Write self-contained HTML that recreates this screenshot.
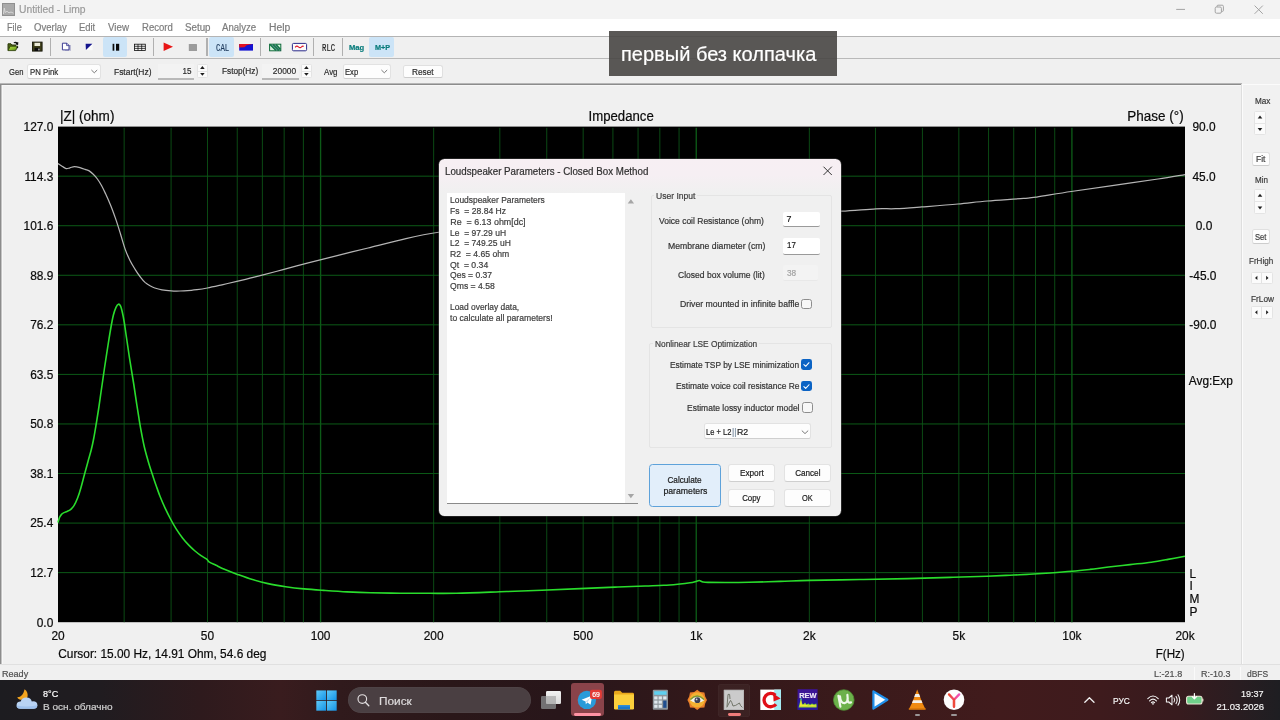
<!DOCTYPE html>
<html><head><meta charset="utf-8"><title>Limp</title>
<style>
html,body{margin:0;padding:0;width:1280px;height:720px;overflow:hidden;background:#f0f0f0;}
body{position:relative;font-family:"Liberation Sans",sans-serif;}
.t{position:absolute;white-space:nowrap;line-height:1;display:block;-webkit-text-stroke:0.2px;}
.b{position:absolute;display:block;}
#root{position:absolute;left:0;top:0;width:1280px;height:720px;overflow:hidden;will-change:transform;}
</style></head><body><div id="root">
<div class="b" style="left:0.00px;top:0.00px;width:1280.00px;height:19.00px;background:#f3f3f3;"></div>
<svg class="b" style="left:2px;top:3.4px" width="13" height="13" viewBox="0 0 13 13"><rect width="13" height="13" fill="#a9a9a9"/><rect x="0.5" y="0.5" width="12" height="12" fill="none" stroke="#8f8f8f"/><path d="M1.5 11 L2.3 5 L3.2 9.5 L5 8.3 L7 9.8 L9 9 L11.5 10.2" fill="none" stroke="#d6d6d6" stroke-width="1"/></svg>
<span class="t" style="left:18.80px;top:5.00px;font-size:10.0px;color:#9b9b9b;transform:scaleX(1.0315);transform-origin:0 0;">Untitled - Limp</span>
<svg class="b" style="left:1170px;top:0" width="100" height="19" viewBox="0 0 100 19"><g fill="none" stroke="#a3a3a3" stroke-width="1"><path d="M6.2 9.4 H15"/><rect x="45.2" y="7" width="6.2" height="6.2" rx="1.3"/><path d="M47 7 V6.2 Q47 5.2 48 5.2 H52.2 Q53.4 5.2 53.4 6.4 V10.4 Q53.4 11.4 52.4 11.4 H51.4"/><path d="M84.6 5.6 L92.8 13.8 M92.8 5.6 L84.6 13.8"/></g></svg>
<div class="b" style="left:0.00px;top:19.00px;width:1280.00px;height:17.20px;background:#ffffff;"></div>
<span class="t" style="left:6.50px;top:23.00px;font-size:10.0px;color:#7d7d7d;transform:scaleX(0.9122);transform-origin:0 0;">File</span>
<span class="t" style="left:33.80px;top:23.00px;font-size:10.0px;color:#7d7d7d;transform:scaleX(0.9520);transform-origin:0 0;">Overlay</span>
<span class="t" style="left:79.40px;top:23.00px;font-size:10.0px;color:#7d7d7d;transform:scaleX(0.9401);transform-origin:0 0;">Edit</span>
<span class="t" style="left:108.00px;top:23.00px;font-size:10.0px;color:#7d7d7d;transform:scaleX(0.9770);transform-origin:0 0;">View</span>
<span class="t" style="left:141.80px;top:23.00px;font-size:10.0px;color:#7d7d7d;transform:scaleX(0.9523);transform-origin:0 0;">Record</span>
<span class="t" style="left:184.50px;top:23.00px;font-size:10.0px;color:#7d7d7d;transform:scaleX(0.9758);transform-origin:0 0;">Setup</span>
<span class="t" style="left:222.00px;top:23.00px;font-size:10.0px;color:#7d7d7d;transform:scaleX(0.9613);transform-origin:0 0;">Analyze</span>
<span class="t" style="left:268.80px;top:23.00px;font-size:10.0px;color:#7d7d7d;transform:scaleX(1.0308);transform-origin:0 0;">Help</span>
<div class="b" style="left:0.00px;top:36.20px;width:1280.00px;height:22.00px;background:#f0f0f0;"></div>
<div class="b" style="left:0.00px;top:36.00px;width:1280.00px;height:1.00px;background:#b4b4b4;"></div>
<div class="b" style="left:0.00px;top:58.00px;width:1280.00px;height:1.00px;background:#b9b9b9;"></div>
<div class="b" style="left:102.80px;top:37.40px;width:24.70px;height:19.60px;background:#cce4f7;border-radius:2px;"></div>
<div class="b" style="left:209.40px;top:37.40px;width:24.40px;height:19.60px;background:#cce4f7;border-radius:2px;"></div>
<div class="b" style="left:369.40px;top:37.40px;width:24.40px;height:19.60px;background:#cce4f7;border-radius:2px;"></div>
<div class="b" style="left:50.05px;top:38.20px;width:1.10px;height:17.80px;background:#b0b0b0;"></div>
<div class="b" style="left:152.95px;top:38.20px;width:1.10px;height:17.80px;background:#b0b0b0;"></div>
<div class="b" style="left:206.45px;top:38.20px;width:1.10px;height:17.80px;background:#b0b0b0;"></div>
<div class="b" style="left:259.85px;top:38.20px;width:1.10px;height:17.80px;background:#b0b0b0;"></div>
<div class="b" style="left:312.85px;top:38.20px;width:1.10px;height:17.80px;background:#b0b0b0;"></div>
<div class="b" style="left:341.95px;top:38.20px;width:1.10px;height:17.80px;background:#b0b0b0;"></div>
<svg class="b" style="left:0;top:36px" width="400" height="23" viewBox="0 36 400 23">
<defs><linearGradient id="fg" x1="0" y1="0" x2="1" y2="1"><stop offset="0" stop-color="#b4dc48"/><stop offset="0.55" stop-color="#86b82a"/><stop offset="1" stop-color="#3f6212"/></linearGradient></defs><path d="M8 50.4 V43.8 H11 L12 45 H15.6 V46.4" fill="#4d6414" stroke="#2c3a0c" stroke-width="1"/><path d="M8 50.6 L10.2 46.2 H17.8 L15.6 50.6 Z" fill="url(#fg)" stroke="#33460e" stroke-width="0.9"/><path d="M13.8 42.9 Q16 41.6 17.3 43.6 M17.8 42.2 L17.6 44.4 L15.6 43.9" fill="none" stroke="#111" stroke-width="1.1"/><circle cx="17.4" cy="47.4" r="0.8" fill="#111"/>
<rect x="32.5" y="42.1" width="9.6" height="9" fill="#3e3e1a" stroke="#15150a" stroke-width="0.9"/><rect x="34.5" y="42.8" width="5.6" height="3.2" fill="#ecebd8"/><rect x="34.6" y="47.8" width="5.2" height="3.2" fill="#0c0c0c"/><rect x="38.4" y="48.6" width="1.1" height="1.8" fill="#e4e4e4"/>
<path d="M65 45 H71 V50.8 H65 Z" fill="#b9b9d2"/><path d="M62.4 43.2 H66.8 L69 45.4 V49.9 H62.4 Z" fill="#ffffff" stroke="#34348e" stroke-width="0.95"/><path d="M66.6 43.2 V45.6 H69" fill="none" stroke="#34348e" stroke-width="0.8"/>
<rect x="85.6" y="43.8" width="7" height="6.4" fill="#fafafa"/><path d="M85.6 43.8 H92.4 L85.9 50 Z" fill="#14148c"/>
<rect x="112.6" y="43.8" width="1.7" height="6.9" fill="#0a0a0a"/><rect x="116.0" y="43.8" width="3.2" height="6.9" fill="#0a0a0a"/>
<rect x="134.4" y="44.2" width="10.9" height="6.3" fill="#f6f6f6" stroke="#0c0c0c" stroke-width="0.8"/><path d="M134.4 46.3 H145.3 M134.4 48.4 H145.3 M138 44.2 V50.5 M141.7 44.2 V50.5" stroke="#0c0c0c" stroke-width="0.75" fill="none"/>
<path d="M163.6 42.6 L173 46.8 L163.6 51 Z" fill="#e81515"/>
<rect x="188.8" y="44" width="8.2" height="7" rx="0.6" fill="#9b9b9b"/>
<rect x="239.2" y="44" width="13.8" height="6.6" fill="#1212d2"/><path d="M239.2 44 H253 L250 44.6 Q246 45 244.5 47.2 L239.2 47.4 Z" fill="#e01020"/>
<rect x="269.6" y="44.2" width="11.2" height="6.6" fill="#d8f0e0" stroke="#0f6a3a" stroke-width="1"/><path d="M270 44.4 L276 50.6 M273 44.4 L279 50.6 M276 44.4 L280.6 49.4" stroke="#0c7a40" stroke-width="1.5" fill="none"/><path d="M271.5 44.6 L277.5 50.6 M274.5 44.6 L280.5 50.6" stroke="#1c3a6a" stroke-width="0.6" fill="none"/>
<rect x="292.4" y="43.4" width="14.2" height="7.4" rx="1.2" fill="#fbfbfb" stroke="#2a2a8a" stroke-width="1"/><path d="M295.2 47.4 Q296.6 45.2 298.4 46.8 T301.4 47 T303.8 46.4" fill="none" stroke="#e0182a" stroke-width="1.1"/>
</svg>
<span class="t" style="left:215.60px;top:44.00px;font-size:10.2px;color:#1e3a5c;font-family:'Liberation Mono',monospace;transform:scaleX(0.7189);transform-origin:0 0;">CAL</span>
<span class="t" style="left:321.90px;top:44.00px;font-size:10px;color:#222;font-family:'Liberation Mono',monospace;transform:scaleX(0.7332);transform-origin:0 0;">RLC</span>
<span class="t" style="left:349.00px;top:44.00px;font-size:7.0px;color:#0a7c7c;font-weight:bold;transform:scaleX(1.0857);transform-origin:0 0;">Mag</span>
<span class="t" style="left:374.50px;top:44.00px;font-size:7.0px;color:#0a7c7c;font-weight:bold;transform:scaleX(1.0351);transform-origin:0 0;">M+P</span>
<div class="b" style="left:0.00px;top:59.00px;width:1280.00px;height:24.20px;background:#f0f0f0;"></div>
<span class="t" style="left:8.80px;top:67.00px;font-size:9.6px;color:#2b2b2b;transform:scaleX(0.7936);transform-origin:0 0;">Gen</span>
<div class="b" style="left:27.00px;top:63.80px;width:73.60px;height:15.20px;background:#fdfdfd;border:1px solid #e2e2e2;border-bottom-color:#cfcfcf;border-radius:2.5px;box-sizing:border-box;"></div>
<span class="t" style="left:29.60px;top:67.00px;font-size:9.4px;color:#2b2b2b;transform:scaleX(0.8305);transform-origin:0 0;">PN Pink</span>
<svg class="b" style="left:90px;top:68px" width="9" height="7" viewBox="0 0 9 7"><path d="M1.4 2 L4.3 4.8 L7.2 2" fill="none" stroke="#6b6b6b" stroke-width="0.9"/></svg>
<span class="t" style="left:113.80px;top:67.00px;font-size:9.6px;color:#2b2b2b;transform:scaleX(0.8790);transform-origin:0 0;">Fstart(Hz)</span>
<div class="b" style="left:157.50px;top:63.80px;width:36.90px;height:15.20px;background:#f3f3f3;"></div>
<div class="b" style="left:157.50px;top:78.40px;width:36.90px;height:1.20px;background:#b9b9b9;"></div>
<span class="t" style="left:180.74px;top:66.00px;font-size:9.4px;color:#2b2b2b;transform:scaleX(0.8607);transform-origin:100% 0;">15</span>
<div class="b" style="left:197.20px;top:64.40px;width:10.80px;height:13.80px;background:#fbfbfb;border:1px solid #e4e4e4;box-sizing:border-box;border-radius:1.5px;"></div>
<div class="b" style="left:197.70px;top:70.90px;width:9.80px;height:0.80px;background:#e6e6e6;"></div>
<svg class="b" style="left:197.2px;top:64.4px" width="10.8" height="13.8" viewBox="197.2 64.4 10.8 13.8"><path d="M200.3 69.3 L202.6 66.4 L204.9 69.3 Z" fill="#1e1e1e"/><path d="M200.3 73.3 L202.6 76.2 L204.9 73.3 Z" fill="#1e1e1e"/></svg>
<span class="t" style="left:222.20px;top:66.00px;font-size:9.6px;color:#2b2b2b;transform:scaleX(0.8591);transform-origin:0 0;">Fstop(Hz)</span>
<div class="b" style="left:262.00px;top:63.80px;width:37.40px;height:15.20px;background:#f3f3f3;"></div>
<div class="b" style="left:262.00px;top:78.40px;width:37.40px;height:1.20px;background:#b9b9b9;"></div>
<span class="t" style="left:269.86px;top:66.00px;font-size:9.4px;color:#2b2b2b;transform:scaleX(0.8914);transform-origin:100% 0;">20000</span>
<div class="b" style="left:301.40px;top:64.40px;width:10.80px;height:13.80px;background:#fbfbfb;border:1px solid #e4e4e4;box-sizing:border-box;border-radius:1.5px;"></div>
<div class="b" style="left:301.90px;top:70.90px;width:9.80px;height:0.80px;background:#e6e6e6;"></div>
<svg class="b" style="left:301.4px;top:64.4px" width="10.8" height="13.8" viewBox="301.4 64.4 10.8 13.8"><path d="M304.5 69.3 L306.8 66.4 L309.1 69.3 Z" fill="#1e1e1e"/><path d="M304.5 73.3 L306.8 76.2 L309.1 73.3 Z" fill="#1e1e1e"/></svg>
<span class="t" style="left:323.80px;top:67.00px;font-size:9.6px;color:#2b2b2b;transform:scaleX(0.8247);transform-origin:0 0;">Avg</span>
<div class="b" style="left:342.50px;top:63.80px;width:48.10px;height:15.20px;background:#fdfdfd;border:1px solid #e2e2e2;border-bottom-color:#cfcfcf;border-radius:2.5px;box-sizing:border-box;"></div>
<span class="t" style="left:345.00px;top:67.00px;font-size:9.4px;color:#2b2b2b;transform:scaleX(0.8149);transform-origin:0 0;">Exp</span>
<svg class="b" style="left:380px;top:68px" width="9" height="7" viewBox="0 0 9 7"><path d="M1.4 2 L4.3 4.8 L7.2 2" fill="none" stroke="#6b6b6b" stroke-width="0.9"/></svg>
<div class="b" style="left:402.50px;top:64.80px;width:40.50px;height:13.40px;background:#fdfdfd;border:1px solid #e0e0e0;border-bottom-color:#cdcdcd;border-radius:2.5px;box-sizing:border-box;"></div>
<span class="t" style="left:412.20px;top:67.00px;font-size:9.6px;color:#2b2b2b;transform:scaleX(0.8613);transform-origin:0 0;">Reset</span>
<div class="b" style="left:0.00px;top:83.20px;width:1280.00px;height:581.40px;background:#f0f0f0;"></div>
<div class="b" style="left:0.00px;top:82.80px;width:1242.00px;height:1.20px;background:#b6b6b6;"></div>
<div class="b" style="left:0.00px;top:83.80px;width:1242.00px;height:1.20px;background:#8c8c8c;"></div>
<div class="b" style="left:1.40px;top:85.00px;width:1240.60px;height:1.00px;background:#f7f7f7;"></div>
<div class="b" style="left:0.00px;top:83.80px;width:1.40px;height:580.80px;background:#8c8c8c;"></div>
<div class="b" style="left:1.40px;top:85.00px;width:1.00px;height:579.60px;background:#c4c4c4;"></div>
<div class="b" style="left:2.40px;top:86.00px;width:1.00px;height:578.60px;background:#f7f7f7;"></div>
<div class="b" style="left:1242.00px;top:84.30px;width:38.00px;height:579.70px;background:#f1f1f1;border-left:1px solid #fbfbfb;border-top:1px solid #fbfbfb;box-sizing:border-box;"></div>
<div class="b" style="left:1241.20px;top:84.30px;width:1.00px;height:579.70px;background:#dedede;"></div>
<svg class="b" style="left:0;top:100px" width="1280" height="540" viewBox="0 100 1280 540">
<rect x="58.0" y="126.6" width="1127.0" height="495.6" fill="#000"/>
<path d="M124.15 127.8V622.2M171.09 127.8V622.2M207.49 127.8V622.2M237.24 127.8V622.2M262.39 127.8V622.2M284.17 127.8V622.2M303.39 127.8V622.2M433.67 127.8V622.2M499.82 127.8V622.2M546.75 127.8V622.2M583.16 127.8V622.2M612.91 127.8V622.2M638.05 127.8V622.2M659.84 127.8V622.2M679.06 127.8V622.2M809.33 127.8V622.2M875.48 127.8V622.2M922.42 127.8V622.2M958.83 127.8V622.2M988.57 127.8V622.2M1013.72 127.8V622.2M1035.51 127.8V622.2M1054.72 127.8V622.2" stroke="#0b4a14" stroke-width="1" fill="none"/>
<path d="M320.58 127.8V622.2M696.25 127.8V622.2M1071.91 127.8V622.2" stroke="#0c5a17" stroke-width="1.35" fill="none"/>
<path d="M58.0 176.16H1185.0M58.0 225.72H1185.0M58.0 275.28H1185.0M58.0 324.84H1185.0M58.0 374.40H1185.0M58.0 423.96H1185.0M58.0 473.52H1185.0M58.0 523.08H1185.0M58.0 572.64H1185.0" stroke="#0c5a17" stroke-width="1" fill="none"/>
<path d="M58.0 163.6 C58.7 164.0 60.6 165.4 62.0 166.2 C63.4 167.0 64.9 168.3 66.2 168.6 C67.5 168.9 68.6 168.1 70.0 167.8 C71.4 167.5 72.7 166.6 74.4 166.6 C76.1 166.6 78.2 167.1 80.0 167.6 C81.8 168.1 83.5 168.8 85.0 169.4 C86.5 170.0 87.9 170.1 89.2 170.9 C90.5 171.7 91.6 172.7 93.0 174.0 C94.4 175.3 96.0 177.1 97.4 179.0 C98.8 180.9 100.1 183.0 101.5 185.5 C102.9 188.0 104.1 190.6 105.6 193.8 C107.1 197.1 108.8 200.9 110.5 205.0 C112.2 209.1 113.8 213.6 115.5 218.4 C117.2 223.2 118.9 228.8 120.5 234.0 C122.1 239.2 123.7 245.2 125.3 249.6 C126.9 254.0 128.4 257.2 130.0 260.5 C131.6 263.8 133.4 266.6 135.1 269.3 C136.8 272.0 138.3 274.3 140.0 276.5 C141.7 278.7 143.3 280.8 145.0 282.4 C146.7 283.9 148.4 284.9 150.0 285.8 C151.6 286.7 152.8 287.3 154.8 288.0 C156.8 288.7 159.3 289.4 162.0 289.9 C164.7 290.4 168.2 290.7 171.2 290.9 C174.2 291.1 177.3 291.1 180.0 291.0 C182.7 290.9 184.8 290.8 187.6 290.6 C190.4 290.4 193.7 290.0 197.0 289.6 C200.3 289.2 203.1 288.8 207.3 288.0 C211.5 287.2 217.1 285.9 222.0 284.8 C226.9 283.7 232.1 282.5 236.8 281.4 C241.5 280.3 245.6 279.3 250.0 278.2 C254.4 277.1 257.6 276.3 263.1 274.9 C268.6 273.5 276.4 271.4 283.0 269.6 C289.6 267.9 296.0 266.1 302.5 264.4 C309.0 262.7 315.1 261.2 322.2 259.4 C329.3 257.6 337.4 255.5 345.0 253.6 C352.6 251.7 358.8 250.3 368.1 248.0 C377.4 245.7 389.4 242.4 400.9 239.8 C412.4 237.2 423.8 234.4 437.0 232.5 C450.2 230.6 459.5 230.0 480.0 228.5 C500.5 227.0 533.3 225.1 560.0 223.5 C586.7 221.9 613.3 220.3 640.0 219.0 C666.7 217.7 693.3 216.6 720.0 215.5 C746.7 214.4 779.8 213.3 800.0 212.6 C820.2 211.9 828.9 211.8 841.5 211.2 C854.1 210.6 866.9 209.2 875.9 208.8 C884.9 208.4 887.9 209.0 895.6 208.7 C903.3 208.4 911.5 207.7 921.9 206.9 C932.3 206.1 947.1 205.0 958.0 204.0 C968.9 203.0 976.6 201.9 987.5 201.0 C998.4 200.1 1015.4 199.1 1023.6 198.4 C1031.8 197.8 1028.8 198.2 1036.7 197.1 C1044.6 195.9 1058.6 193.4 1071.2 191.5 C1083.8 189.6 1097.7 187.7 1112.2 185.6 C1126.7 183.5 1145.9 180.8 1158.0 179.0 C1170.1 177.2 1180.5 175.3 1185.0 174.6" stroke="#b4b4b4" stroke-width="1.25" fill="none"/>
<path d="M58.0 522.5 C58.2 521.7 58.9 518.9 59.5 517.5 C60.1 516.1 60.8 515.2 61.5 514.4 C62.2 513.6 63.1 513.1 64.0 512.6 C64.9 512.1 65.9 511.9 67.0 511.4 C68.1 510.9 69.3 510.6 70.5 509.6 C71.7 508.6 72.8 507.5 74.0 505.6 C75.2 503.7 76.4 501.0 77.6 498.0 C78.8 495.0 79.8 491.8 81.0 487.5 C82.2 483.2 83.8 476.8 85.0 472.5 C86.2 468.2 87.0 465.2 88.0 461.5 C89.0 457.8 90.2 453.9 91.2 450.0 C92.2 446.1 93.0 442.3 93.8 438.0 C94.6 433.7 95.4 428.8 96.2 424.0 C97.0 419.2 97.7 414.8 98.6 409.0 C99.5 403.2 100.4 396.3 101.4 389.5 C102.4 382.7 103.3 375.9 104.5 368.0 C105.7 360.1 107.4 348.8 108.5 342.0 C109.6 335.2 110.2 331.5 111.0 327.0 C111.8 322.5 112.6 318.3 113.4 315.0 C114.2 311.7 115.2 309.2 116.0 307.4 C116.8 305.6 117.7 304.4 118.5 304.2 C119.3 304.0 120.0 305.0 120.6 306.2 C121.2 307.4 121.5 308.7 122.1 311.3 C122.7 313.9 123.5 317.7 124.2 322.0 C124.9 326.3 125.5 331.0 126.4 337.0 C127.3 343.0 128.3 350.1 129.5 358.0 C130.7 365.9 132.6 376.8 133.8 384.5 C135.0 392.2 135.8 398.1 136.7 404.0 C137.6 409.9 138.4 414.8 139.2 419.8 C140.0 424.8 140.8 429.4 141.7 434.0 C142.6 438.6 143.3 442.5 144.4 447.2 C145.5 451.9 147.1 457.4 148.4 462.0 C149.7 466.6 151.1 470.7 152.4 474.6 C153.7 478.5 154.7 481.6 156.0 485.2 C157.3 488.8 158.5 492.5 160.0 496.3 C161.5 500.1 163.3 504.2 165.0 507.8 C166.7 511.4 168.2 514.5 170.0 518.0 C171.8 521.5 173.9 525.3 176.0 528.6 C178.1 531.9 180.3 535.1 182.5 537.9 C184.7 540.7 186.9 543.2 189.0 545.4 C191.1 547.6 193.0 549.3 195.0 551.0 C197.0 552.7 199.0 554.2 201.0 555.6 C203.0 557.0 205.7 558.4 207.0 559.4 C208.3 560.4 207.5 560.8 209.0 561.8 C210.5 562.8 213.3 564.0 216.0 565.3 C218.7 566.6 221.4 568.0 225.0 569.5 C228.6 571.0 232.9 572.7 237.5 574.4 C242.1 576.1 247.4 578.1 252.5 579.6 C257.6 581.1 262.5 582.4 268.0 583.6 C273.5 584.8 279.7 585.8 285.7 586.7 C291.7 587.6 297.7 588.3 304.0 588.9 C310.3 589.5 316.3 589.9 323.5 590.4 C330.7 590.9 339.1 591.5 347.0 591.9 C354.9 592.3 361.9 592.6 370.7 592.8 C379.5 593.0 390.1 593.1 400.0 593.2 C409.9 593.3 420.6 593.3 430.0 593.3 C439.4 593.3 444.9 593.5 456.6 593.2 C468.3 593.0 485.8 592.3 500.0 591.8 C514.2 591.3 528.6 590.7 541.9 590.2 C555.2 589.7 567.8 589.1 580.0 588.6 C592.2 588.1 604.2 587.5 615.0 587.1 C625.8 586.7 636.9 586.3 645.0 586.0 C653.1 585.7 658.0 585.6 663.8 585.3 C669.6 585.0 675.6 584.4 680.0 584.0 C684.4 583.6 687.3 583.2 690.0 582.8 C692.7 582.4 694.5 581.8 696.0 581.4 C697.5 581.0 698.1 580.4 699.3 580.5 C700.5 580.6 701.5 581.7 703.0 582.0 C704.5 582.3 704.3 582.3 708.0 582.4 C711.7 582.5 718.2 582.5 725.0 582.5 C731.8 582.5 739.8 582.5 749.0 582.3 C758.2 582.1 769.8 581.7 780.0 581.4 C790.2 581.1 796.7 580.7 810.0 580.4 C823.3 580.1 843.8 579.8 860.0 579.5 C876.2 579.2 892.5 579.0 907.5 578.6 C922.5 578.2 936.8 577.8 950.0 577.4 C963.2 577.0 976.7 576.6 986.7 576.2 C996.7 575.8 1002.9 575.5 1010.0 575.2 C1017.1 574.9 1022.7 574.7 1029.4 574.3 C1036.1 573.9 1042.9 573.5 1050.0 573.0 C1057.1 572.5 1065.3 571.9 1072.0 571.3 C1078.7 570.7 1083.9 570.1 1090.0 569.4 C1096.1 568.7 1101.9 567.8 1108.6 567.0 C1115.3 566.2 1122.9 565.4 1130.0 564.6 C1137.1 563.8 1145.0 563.1 1151.3 562.2 C1157.6 561.3 1162.4 560.4 1168.0 559.4 C1173.6 558.4 1182.2 556.7 1185.0 556.2" stroke="#29dc2c" stroke-width="1.6" fill="none" stroke-linejoin="round"/>
</svg>
<span class="t" style="left:23.52px;top:122.00px;font-size:11.9px;color:#0a0a0a;">127.0</span>
<span class="t" style="left:24.40px;top:172.00px;font-size:11.9px;color:#0a0a0a;">114.3</span>
<span class="t" style="left:23.52px;top:221.00px;font-size:11.9px;color:#0a0a0a;">101.6</span>
<span class="t" style="left:30.14px;top:271.00px;font-size:11.9px;color:#0a0a0a;">88.9</span>
<span class="t" style="left:30.14px;top:320.00px;font-size:11.9px;color:#0a0a0a;">76.2</span>
<span class="t" style="left:30.14px;top:370.00px;font-size:11.9px;color:#0a0a0a;">63.5</span>
<span class="t" style="left:30.14px;top:419.00px;font-size:11.9px;color:#0a0a0a;">50.8</span>
<span class="t" style="left:30.14px;top:469.00px;font-size:11.9px;color:#0a0a0a;">38.1</span>
<span class="t" style="left:30.14px;top:518.00px;font-size:11.9px;color:#0a0a0a;">25.4</span>
<span class="t" style="left:30.14px;top:568.00px;font-size:11.9px;color:#0a0a0a;">12.7</span>
<span class="t" style="left:36.76px;top:618.00px;font-size:11.9px;color:#0a0a0a;">0.0</span>
<span class="t" style="left:1192.42px;top:122.00px;font-size:11.9px;color:#0a0a0a;">90.0</span>
<span class="t" style="left:1192.42px;top:172.00px;font-size:11.9px;color:#0a0a0a;">45.0</span>
<span class="t" style="left:1195.73px;top:221.00px;font-size:11.9px;color:#0a0a0a;">0.0</span>
<span class="t" style="left:1189.34px;top:271.00px;font-size:11.9px;color:#0a0a0a;">-45.0</span>
<span class="t" style="left:1189.34px;top:320.00px;font-size:11.9px;color:#0a0a0a;">-90.0</span>
<span class="t" style="left:1188.80px;top:376.00px;font-size:11.9px;color:#0a0a0a;">Avg:Exp</span>
<span class="t" style="left:59.50px;top:110.00px;font-size:13.8px;color:#0a0a0a;transform:scaleX(0.9807);transform-origin:0 0;">|Z| (ohm)</span>
<span class="t" style="left:587.26px;top:110.00px;font-size:13.8px;color:#0a0a0a;transform:scaleX(0.9563);transform-origin:50% 0;">Impedance</span>
<span class="t" style="left:1126.12px;top:110.00px;font-size:13.8px;color:#0a0a0a;transform:scaleX(0.9779);transform-origin:100% 0;">Phase (°)</span>
<span class="t" style="left:51.38px;top:631.00px;font-size:11.9px;color:#0a0a0a;">20</span>
<span class="t" style="left:200.87px;top:631.00px;font-size:11.9px;color:#0a0a0a;">50</span>
<span class="t" style="left:310.65px;top:631.00px;font-size:11.9px;color:#0a0a0a;">100</span>
<span class="t" style="left:423.74px;top:631.00px;font-size:11.9px;color:#0a0a0a;">200</span>
<span class="t" style="left:573.23px;top:631.00px;font-size:11.9px;color:#0a0a0a;">500</span>
<span class="t" style="left:689.96px;top:631.00px;font-size:11.9px;color:#0a0a0a;">1k</span>
<span class="t" style="left:803.05px;top:631.00px;font-size:11.9px;color:#0a0a0a;">2k</span>
<span class="t" style="left:952.54px;top:631.00px;font-size:11.9px;color:#0a0a0a;">5k</span>
<span class="t" style="left:1062.32px;top:631.00px;font-size:11.9px;color:#0a0a0a;">10k</span>
<span class="t" style="left:1175.41px;top:631.00px;font-size:11.9px;color:#0a0a0a;">20k</span>
<span class="t" style="left:58.20px;top:649.00px;font-size:11.9px;color:#0a0a0a;">Cursor: 15.00 Hz, 14.91 Ohm, 54.6 deg</span>
<span class="t" style="left:1154.86px;top:649.00px;font-size:11.9px;color:#0a0a0a;transform:scaleX(0.9751);transform-origin:100% 0;">F(Hz)</span>
<span class="t" style="left:1189.40px;top:569.00px;font-size:11.9px;color:#0a0a0a;">L</span>
<span class="t" style="left:1189.40px;top:581.00px;font-size:11.9px;color:#0a0a0a;">I</span>
<span class="t" style="left:1189.40px;top:594.00px;font-size:11.9px;color:#0a0a0a;">M</span>
<span class="t" style="left:1189.40px;top:607.00px;font-size:11.9px;color:#0a0a0a;">P</span>
<div class="b" style="left:0.00px;top:664.60px;width:1280.00px;height:15.60px;background:#f0f0f0;"></div>
<div class="b" style="left:0.00px;top:664.20px;width:1280.00px;height:0.80px;background:#e0e0e0;"></div>
<span class="t" style="left:1.80px;top:669.00px;font-size:9.8px;color:#4e4e4e;transform:scaleX(0.9249);transform-origin:0 0;">Ready</span>
<span class="t" style="left:1153.80px;top:669.00px;font-size:9.8px;color:#4e4e4e;transform:scaleX(0.9243);transform-origin:0 0;">L:-21.8</span>
<span class="t" style="left:1200.50px;top:669.00px;font-size:9.8px;color:#4e4e4e;transform:scaleX(0.9179);transform-origin:0 0;">R:-10.3</span>
<span class="t" style="left:1247.00px;top:669.00px;font-size:9.8px;color:#4e4e4e;transform:scaleX(0.8649);transform-origin:0 0;">dBFS</span>
<div class="b" style="left:1194.00px;top:666.50px;width:0.90px;height:13.00px;background:#fafafa;"></div>
<div class="b" style="left:1240.00px;top:666.50px;width:0.90px;height:13.00px;background:#fafafa;"></div>
<span class="t" style="left:1254.80px;top:96.00px;font-size:9.4px;color:#3a3a3a;transform:scaleX(0.8728);transform-origin:0 0;">Max</span>
<div class="b" style="left:1254.40px;top:110.60px;width:12.00px;height:24.60px;background:#fbfbfb;border:1px solid #e4e4e4;box-sizing:border-box;border-radius:1.5px;"></div>
<div class="b" style="left:1254.90px;top:122.50px;width:11.00px;height:0.80px;background:#e6e6e6;"></div>
<svg class="b" style="left:1254.4px;top:110.6px" width="12.0" height="24.6" viewBox="1254.4 110.6 12.0 24.6"><path d="M1258.1 118.2 L1260.4 115.2 L1262.7 118.2 Z" fill="#1e1e1e"/><path d="M1258.1 127.6 L1260.4 130.5 L1262.7 127.6 Z" fill="#1e1e1e"/></svg>
<div class="b" style="left:1252.00px;top:152.00px;width:17.60px;height:14.20px;background:#fdfdfd;border:1px solid #e0e0e0;border-bottom-color:#cdcdcd;border-radius:2.5px;box-sizing:border-box;"></div>
<span class="t" style="left:1256.20px;top:154.00px;font-size:9.4px;color:#3a3a3a;transform:scaleX(0.9002);transform-origin:0 0;">Fit</span>
<span class="t" style="left:1254.80px;top:175.00px;font-size:9.4px;color:#3a3a3a;transform:scaleX(0.8582);transform-origin:0 0;">Min</span>
<div class="b" style="left:1254.40px;top:188.80px;width:12.00px;height:25.20px;background:#fbfbfb;border:1px solid #e4e4e4;box-sizing:border-box;border-radius:1.5px;"></div>
<div class="b" style="left:1254.90px;top:201.00px;width:11.00px;height:0.80px;background:#e6e6e6;"></div>
<svg class="b" style="left:1254.4px;top:188.8px" width="12.0" height="25.2" viewBox="1254.4 188.8 12.0 25.2"><path d="M1258.1 196.5 L1260.4 193.6 L1262.7 196.5 Z" fill="#1e1e1e"/><path d="M1258.1 206.3 L1260.4 209.2 L1262.7 206.3 Z" fill="#1e1e1e"/></svg>
<div class="b" style="left:1252.00px;top:228.80px;width:17.60px;height:14.80px;background:#fdfdfd;border:1px solid #e0e0e0;border-bottom-color:#cdcdcd;border-radius:2.5px;box-sizing:border-box;"></div>
<span class="t" style="left:1255.20px;top:232.00px;font-size:9.4px;color:#3a3a3a;transform:scaleX(0.8080);transform-origin:0 0;">Set</span>
<span class="t" style="left:1248.80px;top:256.00px;font-size:9.4px;color:#3a3a3a;transform:scaleX(0.8580);transform-origin:0 0;">FrHigh</span>
<div class="b" style="left:1251.00px;top:272.00px;width:21.50px;height:11.80px;background:#fbfbfb;border:1px solid #e4e4e4;box-sizing:border-box;border-radius:1.5px;"></div>
<div class="b" style="left:1261.35px;top:272.50px;width:0.80px;height:10.80px;background:#e2e2e2;"></div>
<svg class="b" style="left:1251px;top:272px" width="21.5" height="11.8" viewBox="1251 272 21.5 11.8"><path d="M1257.4 275.8 L1255.0 277.9 L1257.4 280.0 Z" fill="#1e1e1e"/><path d="M1266.1 275.8 L1268.5 277.9 L1266.1 280.0 Z" fill="#1e1e1e"/></svg>
<span class="t" style="left:1250.80px;top:294.00px;font-size:9.4px;color:#3a3a3a;transform:scaleX(0.8806);transform-origin:0 0;">FrLow</span>
<div class="b" style="left:1251.00px;top:306.00px;width:21.50px;height:12.60px;background:#fbfbfb;border:1px solid #e4e4e4;box-sizing:border-box;border-radius:1.5px;"></div>
<div class="b" style="left:1261.35px;top:306.50px;width:0.80px;height:11.60px;background:#e2e2e2;"></div>
<svg class="b" style="left:1251px;top:306px" width="21.5" height="12.6" viewBox="1251 306 21.5 12.6"><path d="M1257.4 310.2 L1255.0 312.3 L1257.4 314.4 Z" fill="#1e1e1e"/><path d="M1266.1 310.2 L1268.5 312.3 L1266.1 314.4 Z" fill="#1e1e1e"/></svg>
<div class="b" style="left:439.00px;top:159.00px;width:402.00px;height:357.30px;background:linear-gradient(#f7eff3 0px,#f6eff3 16px,#f0f0f0 34px,#f0f0f0 100%);border-radius:5.5px;box-shadow:0 0 0 0.6px rgba(120,120,120,0.55),0 3px 10px rgba(0,0,0,0.35);"></div>
<span class="t" style="left:445.00px;top:167.00px;font-size:10.4px;color:#2e2e2e;transform:scaleX(0.9387);transform-origin:0 0;">Loudspeaker Parameters - Closed Box Method</span>
<svg class="b" style="left:821px;top:164px" width="14" height="14" viewBox="821 164 14 14"><path d="M823.5 166.7 L831.8 175 M831.8 166.7 L823.5 175" stroke="#2a2a2a" stroke-width="0.95" fill="none"/></svg>
<div class="b" style="left:446.60px;top:192.80px;width:191.40px;height:311.20px;background:#ffffff;"></div>
<div class="b" style="left:624.50px;top:192.80px;width:13.50px;height:310.40px;background:#f0f0f0;"></div>
<div class="b" style="left:446.60px;top:503.10px;width:191.40px;height:1.00px;background:#8a8a8a;"></div>
<svg class="b" style="left:624.5px;top:193.5px" width="13.5" height="310" viewBox="624.5 193.5 13.5 310"><path d="M627.2 203 L630.4 198.8 L633.6 203 Z M627.2 493.6 L630.4 497.8 L633.6 493.6 Z" fill="#a6a6a6"/></svg>
<span class="t" style="left:450.30px;top:196.00px;font-size:8.9px;color:#3d3d3d;transform:scaleX(0.9506);transform-origin:0 0;">Loudspeaker Parameters</span>
<span class="t" style="left:450.30px;top:207.00px;font-size:8.9px;color:#3d3d3d;transform:scaleX(0.9669);transform-origin:0 0;">Fs &nbsp;= 28.84 Hz</span>
<span class="t" style="left:450.30px;top:218.00px;font-size:8.9px;color:#3d3d3d;">Re &nbsp;= 6.13 ohm[dc]</span>
<span class="t" style="left:450.30px;top:229.00px;font-size:8.9px;color:#3d3d3d;transform:scaleX(0.9584);transform-origin:0 0;">Le &nbsp;= 97.29 uH</span>
<span class="t" style="left:450.30px;top:239.00px;font-size:8.9px;color:#3d3d3d;transform:scaleX(0.9593);transform-origin:0 0;">L2 &nbsp;= 749.25 uH</span>
<span class="t" style="left:450.30px;top:250.00px;font-size:8.9px;color:#3d3d3d;transform:scaleX(0.9722);transform-origin:0 0;">R2 &nbsp;= 4.65 ohm</span>
<span class="t" style="left:450.30px;top:261.00px;font-size:8.9px;color:#3d3d3d;transform:scaleX(0.9738);transform-origin:0 0;">Qt &nbsp;= 0.34</span>
<span class="t" style="left:450.30px;top:271.00px;font-size:8.9px;color:#3d3d3d;transform:scaleX(0.9637);transform-origin:0 0;">Qes = 0.37</span>
<span class="t" style="left:450.30px;top:282.00px;font-size:8.9px;color:#3d3d3d;transform:scaleX(0.9708);transform-origin:0 0;">Qms = 4.58</span>
<span class="t" style="left:450.30px;top:303.00px;font-size:8.9px;color:#3d3d3d;transform:scaleX(0.9477);transform-origin:0 0;">Load overlay data,</span>
<span class="t" style="left:450.30px;top:314.00px;font-size:8.9px;color:#3d3d3d;transform:scaleX(0.9675);transform-origin:0 0;">to calculate all parameters!</span>
<div class="b" style="left:650.60px;top:195.20px;width:181.60px;height:133.00px;border:1px solid #e4e4e4;border-radius:2px;box-sizing:border-box;"></div>
<div class="b" style="left:654.40px;top:191.00px;width:43.00px;height:9.00px;background:#f0f0f0;"></div>
<span class="t" style="left:656.20px;top:192.00px;font-size:8.9px;color:#3d3d3d;transform:scaleX(0.9645);transform-origin:0 0;">User Input</span>
<span class="t" style="left:659.40px;top:217.00px;font-size:8.9px;color:#333;transform:scaleX(0.9571);transform-origin:0 0;">Voice coil Resistance (ohm)</span>
<div class="b" style="left:782.50px;top:211.90px;width:37.30px;height:15.30px;background:#ffffff;border-radius:2px;border-bottom:1px solid #9a9a9a;box-sizing:border-box;"></div>
<span class="t" style="left:786.40px;top:215.00px;font-size:8.9px;color:#1a1a1a;">7</span>
<span class="t" style="left:667.70px;top:242.00px;font-size:8.9px;color:#333;transform:scaleX(0.9769);transform-origin:0 0;">Membrane diameter (cm)</span>
<div class="b" style="left:782.50px;top:237.80px;width:37.30px;height:17.00px;background:#ffffff;border-radius:2px;border-bottom:1px solid #9a9a9a;box-sizing:border-box;"></div>
<span class="t" style="left:787.00px;top:241.00px;font-size:8.9px;color:#1a1a1a;transform:scaleX(0.8889);transform-origin:0 0;">17</span>
<span class="t" style="left:678.30px;top:271.00px;font-size:8.9px;color:#333;transform:scaleX(0.9611);transform-origin:0 0;">Closed box volume (lit)</span>
<div class="b" style="left:783.00px;top:265.00px;width:34.50px;height:15.80px;background:#f3f3f3;border-radius:2px;border-bottom:1px solid #e8e8e8;box-sizing:border-box;"></div>
<span class="t" style="left:787.00px;top:269.00px;font-size:8.9px;color:#a2a2a2;transform:scaleX(0.9293);transform-origin:0 0;">38</span>
<span class="t" style="left:679.70px;top:300.00px;font-size:8.9px;color:#333;transform:scaleX(0.9769);transform-origin:0 0;">Driver mounted in infinite baffle</span>
<div class="b" style="left:801.30px;top:298.60px;width:10.70px;height:10.40px;background:#f7f7f7;border:1px solid #8d8d8d;border-radius:2.6px;box-sizing:border-box;"></div>
<div class="b" style="left:648.60px;top:343.20px;width:183.60px;height:105.00px;border:1px solid #e4e4e4;border-radius:2px;box-sizing:border-box;"></div>
<div class="b" style="left:653.00px;top:339.00px;width:106.00px;height:10.00px;background:#f0f0f0;"></div>
<span class="t" style="left:654.70px;top:340.00px;font-size:8.9px;color:#3d3d3d;transform:scaleX(0.9375);transform-origin:0 0;">Nonlinear LSE Optimization</span>
<span class="t" style="left:670.00px;top:361.00px;font-size:8.9px;color:#333;transform:scaleX(0.9433);transform-origin:0 0;">Estimate TSP by LSE minimization</span>
<div class="b" style="left:801.30px;top:359.20px;width:10.70px;height:10.60px;background:#0b63c4;border-radius:2.4px;"></div>
<svg class="b" style="left:801.3px;top:359.2px" width="10.7" height="10.6" viewBox="0 0 10 10"><path d="M2.7 5.3 L4.4 6.9 L7.5 3.5" fill="none" stroke="#fff" stroke-width="1.0" stroke-linecap="round" stroke-linejoin="round"/></svg>
<span class="t" style="left:675.60px;top:382.00px;font-size:8.9px;color:#333;transform:scaleX(0.9480);transform-origin:0 0;">Estimate voice coil resistance Re</span>
<div class="b" style="left:801.30px;top:380.60px;width:10.70px;height:10.70px;background:#0b63c4;border-radius:2.4px;"></div>
<svg class="b" style="left:801.3px;top:380.6px" width="10.7" height="10.7" viewBox="0 0 10 10"><path d="M2.7 5.3 L4.4 6.9 L7.5 3.5" fill="none" stroke="#fff" stroke-width="1.0" stroke-linecap="round" stroke-linejoin="round"/></svg>
<span class="t" style="left:686.90px;top:404.00px;font-size:8.9px;color:#333;transform:scaleX(0.9541);transform-origin:0 0;">Estimate lossy inductor model</span>
<div class="b" style="left:802.00px;top:402.00px;width:11.00px;height:10.60px;background:#f7f7f7;border:1px solid #8d8d8d;border-radius:2.6px;box-sizing:border-box;"></div>
<div class="b" style="left:703.60px;top:423.40px;width:107.80px;height:15.60px;background:#fdfdfd;border:1px solid #e2e2e2;border-bottom-color:#cfcfcf;border-radius:2.5px;box-sizing:border-box;"></div>
<span class="t" style="left:706.00px;top:428.00px;font-size:8.9px;color:#1a1a1a;transform:scaleX(0.8483);transform-origin:0 0;">Le + L2</span>
<span class="t" style="left:731.80px;top:428.00px;font-size:8.9px;color:#7d8ea0;transform:scaleX(0.9948);transform-origin:0 0;">||</span>
<span class="t" style="left:736.80px;top:428.00px;font-size:8.9px;color:#1a1a1a;transform:scaleX(0.9844);transform-origin:0 0;">R2</span>
<svg class="b" style="left:800px;top:427.6px" width="10" height="8" viewBox="0 0 10 8"><path d="M1.8 2.6 L5 5.6 L8.2 2.6" fill="none" stroke="#6b6b6b" stroke-width="0.9"/></svg>
<div class="b" style="left:649.40px;top:464.40px;width:71.40px;height:42.20px;background:#e2eefa;border:1px solid #5ea2da;border-radius:3.5px;box-sizing:border-box;"></div>
<span class="t" style="left:666.35px;top:476.00px;font-size:8.9px;color:#1a1a1a;transform:scaleX(0.9244);transform-origin:50% 0;">Calculate</span>
<span class="t" style="left:662.59px;top:487.00px;font-size:8.9px;color:#1a1a1a;transform:scaleX(0.9819);transform-origin:50% 0;">parameters</span>
<div class="b" style="left:727.80px;top:463.80px;width:47.40px;height:18.60px;background:#fdfdfd;border:1px solid #e3e3e3;border-bottom-color:#cfcfcf;border-radius:3px;box-sizing:border-box;"></div>
<span class="t" style="left:738.64px;top:469.00px;font-size:8.9px;color:#1a1a1a;transform:scaleX(0.9291);transform-origin:50% 0;">Export</span>
<div class="b" style="left:783.70px;top:463.80px;width:47.60px;height:18.60px;background:#fdfdfd;border:1px solid #e3e3e3;border-bottom-color:#cfcfcf;border-radius:3px;box-sizing:border-box;"></div>
<span class="t" style="left:793.55px;top:469.00px;font-size:8.9px;color:#1a1a1a;transform:scaleX(0.9132);transform-origin:50% 0;">Cancel</span>
<div class="b" style="left:727.80px;top:489.00px;width:47.40px;height:18.40px;background:#fdfdfd;border:1px solid #e3e3e3;border-bottom-color:#cfcfcf;border-radius:3px;box-sizing:border-box;"></div>
<span class="t" style="left:741.01px;top:494.00px;font-size:8.9px;color:#1a1a1a;transform:scaleX(0.8856);transform-origin:50% 0;">Copy</span>
<div class="b" style="left:783.70px;top:489.00px;width:47.60px;height:18.40px;background:#fdfdfd;border:1px solid #e3e3e3;border-bottom-color:#cfcfcf;border-radius:3px;box-sizing:border-box;"></div>
<span class="t" style="left:800.97px;top:494.00px;font-size:8.9px;color:#1a1a1a;transform:scaleX(0.8321);transform-origin:50% 0;">OK</span>
<div class="b" style="left:609.40px;top:31.40px;width:227.50px;height:44.90px;background:rgba(72,70,68,0.9);"></div>
<span class="t" style="left:620.50px;top:44.00px;font-size:20.5px;color:#ffffff;transform:scaleX(0.9770);transform-origin:0 0;">первый без колпачка</span>
<div class="b" style="left:0.00px;top:680.20px;width:1280.00px;height:39.80px;background:linear-gradient(90deg,#1d1c20 0px,#201c20 100px,#2e1a1d 200px,#391c1e 280px,#301a1c 340px,#2a1719 450px,#28161a 560px,#32181a 700px,#3a1a1b 850px,#411b1c 1000px,#3e1b1d 1100px,#371b1e 1180px,#2a1d21 1235px,#1e1e22 1280px);"></div>
<svg class="b" style="left:14px;top:686px" width="28" height="26" viewBox="14 686 28 26"><path d="M24.6 689.2 Q28.6 692 27.4 697.4 Q24 700.6 19.6 699.4 Q17.6 698.6 17.2 697.2 Q22.6 697.6 24.6 689.2 Z" fill="#f2a41f"/><path d="M20.6 708.8 Q16.4 708.6 16.6 704.8 Q17 701.6 20.6 701.6 Q22 697.2 26.6 697.4 Q30.8 697.6 31.8 701.4 Q37.4 700.8 37.4 705.2 Q37.2 708.8 33.2 708.8 Z" fill="#b9d3f3"/><path d="M20.6 708.8 Q16.4 708.6 16.6 705.4 Q26 707.8 37.4 705.2 Q37.2 708.8 33.2 708.8 Z" fill="#9fc1ec"/></svg>
<span class="t" style="left:42.80px;top:689.00px;font-size:9.8px;color:#ffffff;transform:scaleX(0.9242);transform-origin:0 0;">8°C</span>
<span class="t" style="left:42.80px;top:702.00px;font-size:9.6px;color:#cfcfcf;transform:scaleX(1.0462);transform-origin:0 0;">В осн. облачно</span>
<svg class="b" style="left:316px;top:690px" width="21" height="21" viewBox="0 0 20 20"><defs><linearGradient id="wg" x1="0" y1="0" x2="1" y2="1"><stop offset="0" stop-color="#5fcaf8"/><stop offset="1" stop-color="#1593e6"/></linearGradient></defs><rect x="0.3" y="0.4" width="9.3" height="9.3" fill="url(#wg)"/><rect x="10.4" y="0.4" width="9.3" height="9.3" fill="url(#wg)"/><rect x="0.3" y="10.4" width="9.3" height="9.3" fill="url(#wg)"/><rect x="10.4" y="10.4" width="9.3" height="9.3" fill="url(#wg)"/></svg>
<div class="b" style="left:347.50px;top:686.60px;width:183.00px;height:26.60px;background:#4a3f42;border-radius:13.3px;box-shadow:inset 0 0 0 0.6px rgba(255,255,255,0.05);"></div>
<svg class="b" style="left:355px;top:692px" width="16" height="16" viewBox="355 692 16 16"><circle cx="362.3" cy="699" r="4.3" fill="none" stroke="#e4e0e1" stroke-width="1.15"/><path d="M365.4 702.2 L368.8 705.8" stroke="#e4e0e1" stroke-width="1.3" stroke-linecap="round"/></svg>
<span class="t" style="left:378.50px;top:696.00px;font-size:11px;color:#dedbdc;transform:scaleX(1.0761);transform-origin:0 0;">Поиск</span>
<div class="b" style="left:540.60px;top:696.00px;width:15.60px;height:12.80px;background:#737173;border-radius:1.2px;"></div>
<div class="b" style="left:545.60px;top:690.80px;width:15.40px;height:13.00px;background:linear-gradient(180deg,#f2f2f2,#d9d9d9);border-radius:1.2px;"></div>
<div class="b" style="left:545.60px;top:696.00px;width:10.60px;height:7.80px;background:rgba(150,150,150,0.55);"></div>
<div class="b" style="left:571.00px;top:683.20px;width:32.50px;height:33.00px;background:#8a434a;border-radius:3px;"></div>
<div class="b" style="left:573.80px;top:713.00px;width:26.80px;height:3.00px;background:#ff93a4;border-radius:1.4px;"></div>
<svg class="b" style="left:575px;top:688px" width="28" height="24" viewBox="575 688 28 24"><circle cx="586.9" cy="699.9" r="9.2" fill="#2a9bd9"/><path d="M581.6 699.8 L592.2 695.6 L590.6 704.8 L587.4 702.6 L585.8 704.2 L585.6 701.4 Z" fill="#fff"/><path d="M585.6 701.4 L590.4 697.4 L587.4 702.6 Z" fill="#c7dcec"/><rect x="590" y="689.8" width="11.9" height="9.3" rx="2" fill="#e33b36"/></svg>
<span class="t" style="left:591.88px;top:691.00px;font-size:7.4px;color:#ffffff;transform:scaleX(0.9233);transform-origin:50% 0;">69</span>
<svg class="b" style="left:613px;top:689px" width="22" height="22" viewBox="613 689 22 22"><path d="M614 692.4 Q614 690.8 615.4 690.8 H620.2 L622.2 692.8 H632.6 Q634 692.8 634 694.2 V708 H614 Z" fill="#e9a81c"/><path d="M614 694.6 H634 V708.2 Q634 709.5 632.8 709.5 H615.2 Q614 709.5 614 708.2 Z" fill="#fbcf3c"/><path d="M618 705.2 H630 V709.5 H618 Z" fill="#1a77c9"/><path d="M618 705.2 H630 V706.6 H618 Z" fill="#2b8fe0"/></svg>
<svg class="b" style="left:652px;top:689px" width="17" height="22" viewBox="652 689 17 22"><rect x="652.8" y="689.8" width="15.2" height="20" rx="1" fill="#8e969c"/><rect x="654.2" y="691.2" width="12.4" height="3.6" fill="#5fd0f0"/><g fill="#dfe8ee"><rect x="654.2" y="696.4" width="3.3" height="3"/><rect x="658.6" y="696.4" width="3.3" height="3"/><rect x="663.2" y="696.4" width="3.3" height="3"/><rect x="654.2" y="700.6" width="3.3" height="3"/><rect x="658.6" y="700.6" width="3.3" height="3"/><rect x="654.2" y="704.8" width="3.3" height="3"/><rect x="658.6" y="704.8" width="3.3" height="3"/></g><rect x="663.2" y="700.6" width="3.3" height="7.2" fill="#1f4e8f"/></svg>
<svg class="b" style="left:686px;top:688px" width="23" height="24" viewBox="686 688 23 24"><path d="M697.2 689.8 L700.2 692 L704.4 692.4 L705.2 696.4 L707 699.9 L705.2 703.4 L704.4 707.4 L700.2 707.8 L697.2 710 L694.2 707.8 L690 707.4 L689.2 703.4 L687.4 699.9 L689.2 696.4 L690 692.4 L694.2 692 Z" fill="#ea7f2a"/><circle cx="697.2" cy="699.9" r="7.6" fill="#f3b233"/><path d="M690.2 700.2 Q697.2 693.4 704.2 700.2 Q697.2 706 690.2 700.2 Z" fill="#f4f1e6"/><path d="M690.4 699.4 Q697.2 692.6 704 699.4" fill="none" stroke="#7a9a3a" stroke-width="1.4"/><circle cx="697.4" cy="700.2" r="2.9" fill="#3a3f55"/><circle cx="696.6" cy="699.4" r="0.9" fill="#cfd6e6"/></svg>
<div class="b" style="left:718.00px;top:683.50px;width:32.00px;height:33.10px;background:rgba(255,255,255,0.04);border-radius:3px;box-shadow:inset 0 0 0 0.6px rgba(255,255,255,0.04);"></div>
<div class="b" style="left:727.50px;top:713.30px;width:13.10px;height:2.70px;background:#f07c7a;border-radius:1.4px;"></div>
<svg class="b" style="left:723px;top:689px" width="22" height="22" viewBox="723 689 22 22"><rect x="723.8" y="689.8" width="20.2" height="20.2" fill="#cbcbcb"/><rect x="724.3" y="690.3" width="19.2" height="19.2" fill="none" stroke="#b4b4b4" stroke-width="0.8"/><path d="M727 706.6 L728 694.4 L729.6 694.4 L730 699 M726.8 707.4 L729.6 702 L730.6 700.4 L731.8 702.6 L733 706 L735.6 705.4 L737.6 704.2 L739.4 703 L740.6 705.6 L742.4 707.4" fill="none" stroke="#676b5e" stroke-width="0.9"/></svg>
<svg class="b" style="left:760px;top:689px" width="22" height="22" viewBox="760 689 22 22"><rect x="760.3" y="689.6" width="20.7" height="20.4" fill="#ffffff"/><rect x="774.2" y="689.6" width="6.8" height="20.4" fill="#a5eaf2"/><path d="M775.4 695.2 A6.7 6.7 0 1 0 776 704.2" fill="none" stroke="#e01018" stroke-width="3.3"/><path d="M773.2 693.4 L780.6 698.6 L773.6 701.4 Z" fill="#e01018"/></svg>
<svg class="b" style="left:797px;top:688px" width="22" height="23" viewBox="797 688 22 23"><rect x="797.6" y="689.2" width="20" height="20.6" fill="#3c1496"/><rect x="797.6" y="699" width="20" height="10.8" fill="#2a1a9a"/><path d="M798.6 707.6 L800 702 L801 697.6 L802 703.4 L803.6 704.2 L805 702.6 L806.4 704.6 L808.4 703.6 L810 704.8 L812 703.4 L814 704.6 L816.4 703.6 L816.6 707.6 Z" fill="#8fd635"/><path d="M800 704.6 L801 699.4 L802 705 L805 704.4 L808.4 705.4 L812 705 L816.4 705.4 L816.4 706.6 L799.6 706.6 Z" fill="#f3e53a"/><path d="M800.6 700 L801 695.6 L801.6 700 Z" fill="#3fd0e0"/></svg>
<span class="t" style="left:798.73px;top:692.00px;font-size:7.6px;color:#ece6f6;font-weight:bold;transform:scaleX(0.9813);transform-origin:50% 0;">REW</span>
<svg class="b" style="left:832px;top:688px" width="24" height="24" viewBox="832 688 24 24"><circle cx="843.8" cy="700" r="10.3" fill="#6cb14a"/><circle cx="843.8" cy="700" r="10.3" fill="none" stroke="#4f8f35" stroke-width="0.8"/><path d="M838.4 695.8 L840.4 706.6 M840 696.4 Q840.4 703.4 844.6 703.2 Q848.6 702.8 847.4 694.8 M847.6 700 Q848 703.4 851 702.4" fill="none" stroke="#eef7e8" stroke-width="2.2" stroke-linecap="round"/></svg>
<svg class="b" style="left:870px;top:688px" width="21" height="24" viewBox="870 688 21 24"><path d="M873.4 691.4 L887.4 699.8 L873.4 708.6 Z" fill="#f4fbff" stroke="#1f8fea" stroke-width="2.2" stroke-linejoin="round"/></svg>
<svg class="b" style="left:907px;top:688px" width="21" height="23" viewBox="907 688 21 23"><path d="M917.2 689.4 L923.2 705 H911.2 Z" fill="#f28a12"/><path d="M915.3 694 H919.1 L920.2 697 H914.2 Z M913 700.2 H921.4 L922.4 703 H912 Z" fill="#f3efe8"/><path d="M911.2 704.4 H923.2 L925.6 709.4 H908.8 Z" fill="#f08a10"/><path d="M908.8 708.2 H925.6 V709.6 H908.8 Z" fill="#d9760a"/></svg>
<div class="b" style="left:914.60px;top:713.60px;width:5.40px;height:2.40px;background:#9b9697;border-radius:1.2px;"></div>
<svg class="b" style="left:942px;top:688px" width="24" height="24" viewBox="942 688 24 24"><defs><linearGradient id="yg" x1="0" y1="0" x2="1" y2="0"><stop offset="0" stop-color="#f0452e"/><stop offset="1" stop-color="#f250c0"/></linearGradient></defs><circle cx="954" cy="699.8" r="10.3" fill="#fdfdfd"/><path d="M949 694.4 L954 699.8 L959.2 694.4 M954 699.8 V706.8" fill="none" stroke="url(#yg)" stroke-width="2.3" stroke-linecap="round" stroke-linejoin="round"/><path d="M954 699.8 V706.8" stroke="#ee4a3a" stroke-width="2.3" stroke-linecap="round"/></svg>
<div class="b" style="left:951.00px;top:713.60px;width:6.00px;height:2.40px;background:#9b9697;border-radius:1.2px;"></div>
<svg class="b" style="left:1080px;top:690px" width="130" height="20" viewBox="1080 690 130 20"><path d="M1084.8 702.2 L1089.4 697.7 L1094 702.2" fill="none" stroke="#f2f2f2" stroke-width="1.3" stroke-linecap="round" stroke-linejoin="round"/><g fill="none" stroke="#f2f2f2" stroke-width="1.15" stroke-linecap="round"><path d="M1147.8 698.6 Q1153 693.4 1158.2 698.6"/><path d="M1149.6 700.8 Q1153 697.4 1156.4 700.8"/><path d="M1151.4 702.7 Q1153 701.2 1154.6 702.7"/></g><circle cx="1153" cy="703.8" r="0.85" fill="#f2f2f2"/><path d="M1166.4 698 H1168.8 L1172 695.2 V704.8 L1168.8 702 H1166.4 Z" fill="none" stroke="#f2f2f2" stroke-width="1.05" stroke-linejoin="round"/><g fill="none" stroke="#f2f2f2" stroke-width="1.05" stroke-linecap="round"><path d="M1174 698 Q1175.4 700 1174 702"/><path d="M1176 696.4 Q1178.4 700 1176 703.6"/><path d="M1178 694.8 Q1181.4 700 1178 705.2"/></g><rect x="1186.6" y="696.2" width="15.4" height="7.8" rx="2" fill="#6fd08a" stroke="#efe6d6" stroke-width="1.1"/><rect x="1202.2" y="698.6" width="1.2" height="3" rx="0.5" fill="#efe6d6"/><path d="M1194.4 693.6 V698.2 M1192.2 696.6 L1194.4 698.8 L1196.6 696.6" fill="none" stroke="#ffffff" stroke-width="1.2" stroke-linejoin="round" stroke-linecap="round"/></svg>
<span class="t" style="left:1112.70px;top:696.00px;font-size:9.8px;color:#f4f4f4;transform:scaleX(0.8510);transform-origin:0 0;">РУС</span>
<span class="t" style="left:1239.28px;top:689.00px;font-size:9.8px;color:#f4f4f4;transform:scaleX(0.9215);transform-origin:100% 0;">19:37</span>
<span class="t" style="left:1215.15px;top:702.00px;font-size:9.8px;color:#f4f4f4;transform:scaleX(0.9684);transform-origin:100% 0;">21.03.2026</span>
</div></body></html>
